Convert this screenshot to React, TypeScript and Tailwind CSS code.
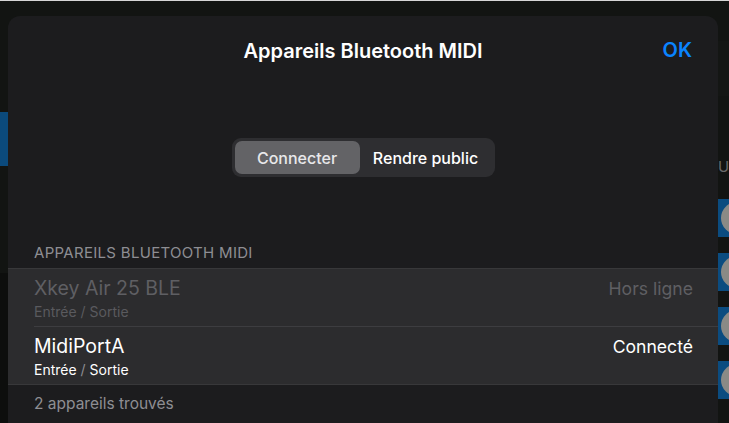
import React from 'react'

const font = { fontFamily: 'Inter, "Noto Sans", sans-serif' }

function Backdrop() {
  // right edge of the app behind the sheet: blue tracks with grey knobs
  return (
    <div className="flex h-full w-[11px] flex-col">
      <div className="h-[40px]" />
      <div className="h-[55px] bg-[#141614]" />
      <div className="h-[50px]" />
      <div className="flex h-[43px] items-center text-[15px] text-[#6a6a6a]">U</div>
      <div className="h-[10px]" />
      {[0, 1, 2, 3].map(i => (
        <div key={i} className="flex flex-col">
          <div className="relative h-[38px] overflow-hidden bg-[#0b4c80]">
            <div className="absolute left-[3px] top-[3px] h-[32px] w-[32px] rounded-full bg-[#8a8a86]" />
          </div>
          <div className="h-[16px]" />
        </div>
      ))}
    </div>
  )
}

function Row({ name, status, dim }: { name: string; status: string; dim?: boolean }) {
  return (
    <div className="flex h-[57px] items-start justify-between pr-[25px]">
      <div className="pt-[7px]">
        <div className={`text-[19.5px] leading-[24px] ${dim ? 'text-[#5f5f63]' : 'text-white'}`}>{name}</div>
        <div className={`mt-[4px] text-[14px] leading-[16px] ${dim ? 'text-[#5a5a5e]' : 'text-white'}`}>
          Entrée <span className={dim ? '' : 'text-[#8e8e93]'}>/</span> Sortie
        </div>
      </div>
      <div className={`pt-[8px] text-[17.6px] leading-[24px] ${dim ? 'text-[#5f5f63]' : 'text-white'}`}>{status}</div>
    </div>
  )
}

export default function App() {
  return (
    <div className="relative h-[423px] w-[729px] overflow-hidden bg-[#121412]" style={font}>
      <div className="h-px bg-[#d6d6d6]" />
      <div className="flex h-[422px]">
        <div className="flex w-[8px] flex-col">
          <div className="h-[111px]" />
          <div className="h-[54px] bg-[#0b4a7c]" />
          <div className="h-[107px]" />
          <div className="flex-1 bg-[#0d0e0d]" />
        </div>

        <div className="mt-[15px] flex w-[710px] flex-col rounded-t-[12px] bg-[#1c1c1e]">
          <div className="relative flex h-[70px] items-center justify-center">
            <div className="text-[20px] font-semibold text-white">Appareils Bluetooth MIDI</div>
            <div className="absolute right-[26px] top-[19px] text-[20px] font-semibold text-[#0a84ff]">OK</div>
          </div>

          <div className="mt-[52px] flex justify-center">
            <div className="flex h-[39px] w-[263px] items-center rounded-[9px] bg-[#2e2e31] p-[3px]">
              <div className="flex h-full w-[125px] items-center justify-center rounded-[7px] bg-[#636366] text-[16px] font-medium text-[#e8e8ea]">
                Connecter
              </div>
              <div className="flex flex-1 items-center justify-center text-[16px] font-medium text-white">
                Rendre public
              </div>
            </div>
          </div>

          <div className="mt-[66px] pl-[26px] text-[15px] leading-[20px] tracking-[0.3px] text-[#8e8e93]">
            APPAREILS BLUETOOTH MIDI
          </div>

          <div className="mt-[5px] border-t border-[#38383a] bg-[#2c2c2e] pl-[26px]">
            <div className="border-b border-[#3d3d40]">
              <Row name="Xkey Air 25 BLE" status="Hors ligne" dim />
            </div>
            <Row name="MidiPortA" status="Connecté" />
          </div>
          <div className="border-t border-[#38383a] pl-[26px] pt-[7px] text-[15.5px] text-[#8e8e93]">
            2 appareils trouvés
          </div>
        </div>

        <Backdrop />
      </div>
    </div>
  )
}
